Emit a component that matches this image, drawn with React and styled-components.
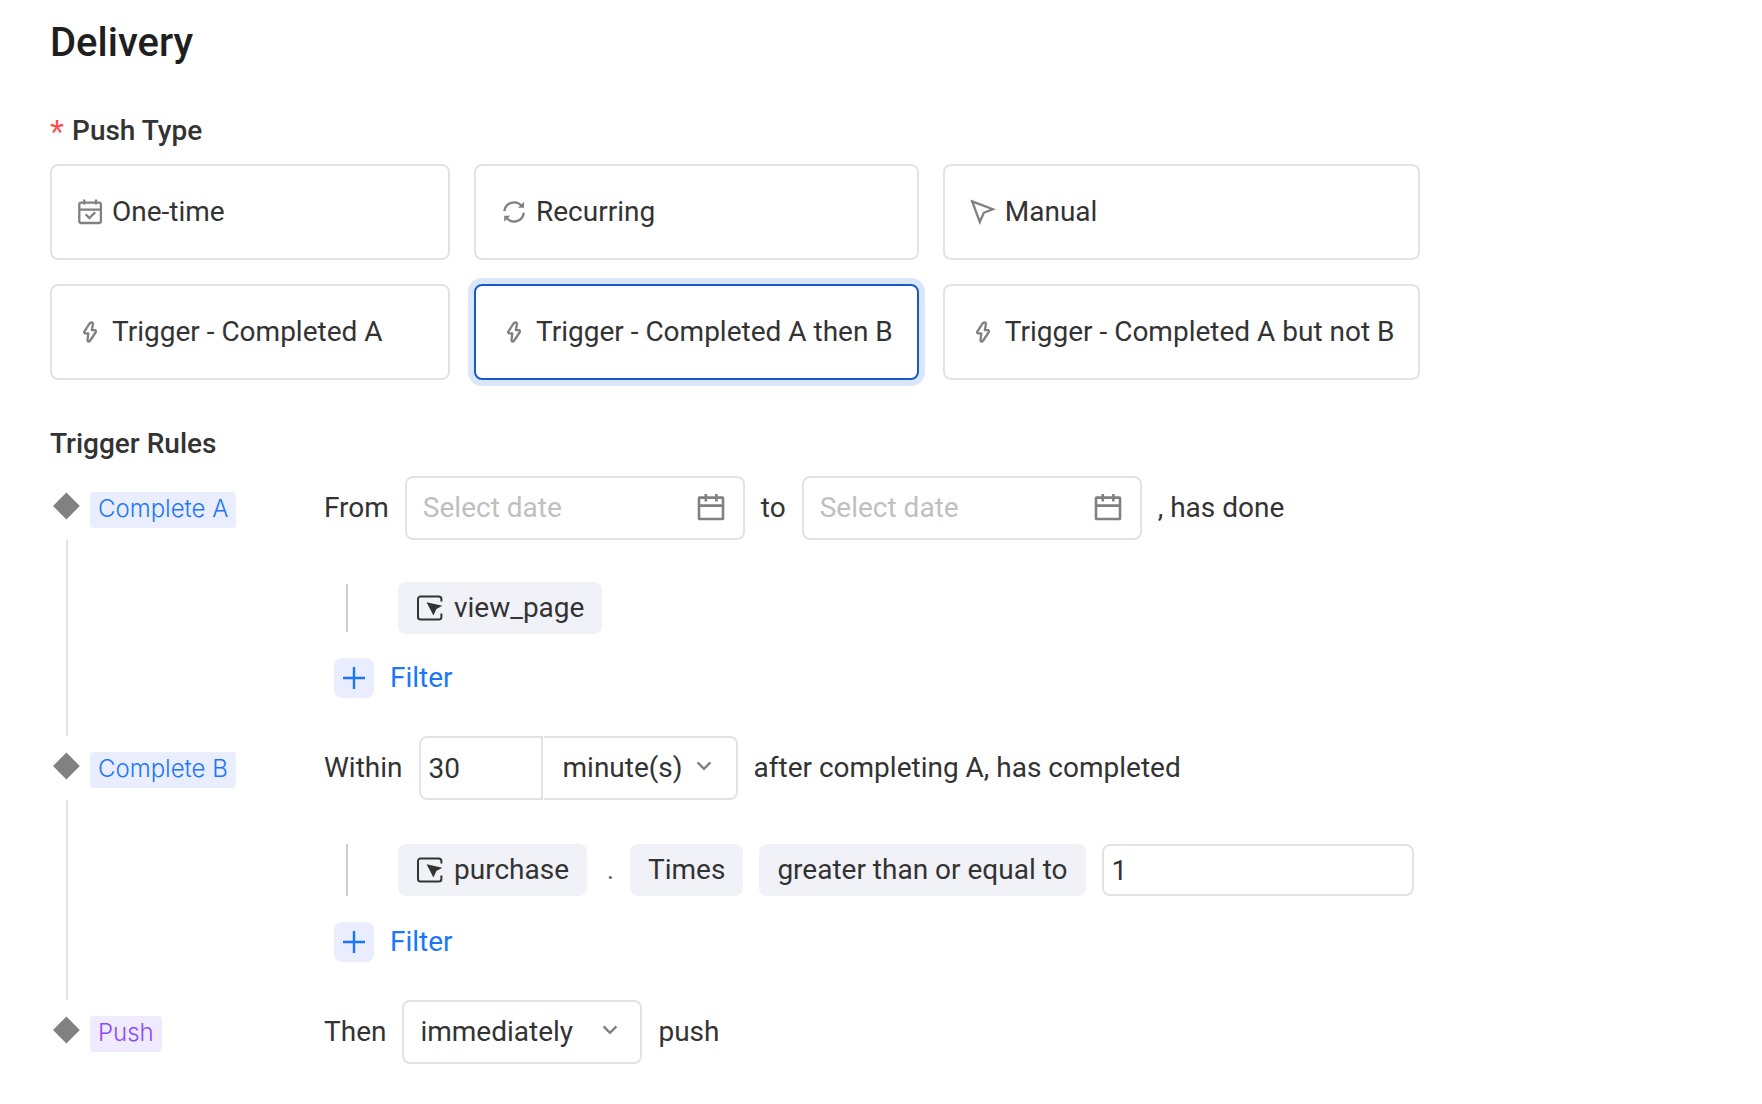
import React, { useState } from 'react'
import styled, { createGlobalStyle } from 'styled-components'

const GlobalStyle = createGlobalStyle`
  * {
    box-sizing: border-box;
  }
  body {
    margin: 0;
    background: #ffffff;
    color: #333333;
    font-family: Roboto, 'Liberation Sans', sans-serif;
    font-size: 28px;
    line-height: 44px;
  }
  input, select, button {
    font: inherit;
    color: inherit;
  }
`

const OnceIcon = () => (
  <Icon viewBox="0 0 28 28">
    <rect x="3.3" y="4.6" width="21.6" height="20.4" rx="2" />
    <path d="M3.3 11.6h21.6M8.3 1.4v5M20 1.4v5M9.6 16.2l3.8 3.8 5.8-5.8" />
  </Icon>
)

const RecurringIcon = () => (
  <Icon viewBox="0 0 28 28">
    <path d="M4.4 13.2A9.7 9.7 0 0 1 21.6 8M23.8 14.6A9.7 9.7 0 0 1 6.4 19.6" />
    <path d="M24 3.8v6h-6zM4.2 23.8v-6h6z" fill="currentColor" stroke="none" />
  </Icon>
)

const ManualIcon = () => (
  <Icon viewBox="0 0 28 28">
    <path d="M3.2 3.4l20.6 7.8-9 3.6-4 9.2z" />
  </Icon>
)

const BoltIcon = () => (
  <Icon viewBox="0 0 28 28">
    <path d="M13.8 5.2L8.3 13.6q-.6 1.4 .8 1.8h3.2l-.8 7.2q.6 2 2.4 .4l5.9-9q.6-1.4-.8-1.8h-3.2l1.2-6.6q-.8-2.2-3.2-.4z" strokeLinejoin="round" />
  </Icon>
)

const CalendarIcon = () => (
  <Icon viewBox="0 0 28 28" $heavy>
    <rect x="2" y="3.6" width="24" height="21.4" rx="0.6" />
    <path d="M2 11.6h24M8.8 0v7.4M19.4 0v7.4" />
  </Icon>
)

const EventIcon = () => (
  <Icon viewBox="0 0 28 28" $dark>
    <path d="M25.4 7.6V5a2.6 2.6 0 0 0-2.6-2.6H4.6A2.6 2.6 0 0 0 2 5v18a2.6 2.6 0 0 0 2.6 2.6h18.2a2.6 2.6 0 0 0 2.6-2.6v-3.6" />
    <path d="M10.6 8.2l15.8 3.6-6 3.2-3 6.4z" fill="currentColor" stroke="none" />
  </Icon>
)

const pushTypes = [
  { id: 'once', label: 'One-time', icon: OnceIcon },
  { id: 'recurring', label: 'Recurring', icon: RecurringIcon },
  { id: 'manual', label: 'Manual', icon: ManualIcon },
  { id: 'a', label: 'Trigger - Completed A', icon: BoltIcon },
  { id: 'a-then-b', label: 'Trigger - Completed A then B', icon: BoltIcon },
  { id: 'a-not-b', label: 'Trigger - Completed A but not B', icon: BoltIcon },
]

const Step = ({ tag, purple, last, children }) => (
  <StepRow>
    <Rail>
      <Marker>
        <Diamond viewBox="0 0 28 28">
          <path d="M13.4 .6L26.8 14 13.4 27.4 0 14z" />
        </Diamond>
      </Marker>
      {!last && <RailLine />}
    </Rail>
    <TagCell>
      <Tag $purple={purple}>{tag}</Tag>
    </TagCell>
    <StepBody $last={last}>{children}</StepBody>
  </StepRow>
)

const DateField = ({ id }) => (
  <DateBox>
    <input id={id} type="text" placeholder="Select date" />
    <CalendarIcon />
  </DateBox>
)

const Dropdown = ({ id, label, options, width, attached }) => (
  <SelectBox $width={width}>
    <Select id={id} aria-label={label} $attached={attached}>
      {options.map(o => <option key={o}>{o}</option>)}
    </Select>
    <Chevron viewBox="0 0 16 16" $attached={attached}>
      <path d="M1.6 4.4L8 10.8l6.4-6.4" />
    </Chevron>
  </SelectBox>
)

const AddFilter = () => (
  <FilterButton type="button">
    <Plus>
      <svg viewBox="0 0 22 22">
        <path d="M11 0v22M0 11h22" />
      </svg>
    </Plus>
    Filter
  </FilterButton>
)

const App = () => {
  const [type, setType] = useState('a-then-b')

  return (
    <Page>
      <GlobalStyle />
      <Title>Delivery</Title>

      <Group>
        <Legend><Star>*</Star>Push Type</Legend>
        <Cards>
          {pushTypes.map(({ id, label, icon: TypeIcon }) => (
            <Card key={id} $active={id === type}>
              <input type="radio" name="push-type" checked={id === type} onChange={() => setType(id)} />
              <TypeIcon />
              {label}
            </Card>
          ))}
        </Cards>
      </Group>

      <Subtitle>Trigger Rules</Subtitle>

      <Step tag="Complete A">
        <Line>
          <label htmlFor="from">From</label>
          <DateField id="from" />
          <label htmlFor="to">to</label>
          <DateField id="to" />
          <span>, has done</span>
        </Line>
        <Events>
          <Bar />
          <Chip type="button"><EventIcon />view_page</Chip>
        </Events>
        <AddFilter />
      </Step>

      <Step tag="Complete B">
        <Line>
          <label htmlFor="window">Within</label>
          <Joined>
            <WindowInput id="window" type="text" defaultValue="30" />
            <Dropdown label="Unit" width={195} attached options={['minute(s)', 'hour(s)', 'day(s)']} />
          </Joined>
          <span>after completing A, has completed</span>
        </Line>
        <Events $tall>
          <Bar />
          <Chip type="button"><EventIcon />purchase</Chip>
          <Dot>.</Dot>
          <Conditions>
            <Chip type="button">Times</Chip>
            <Chip type="button">greater than or equal to</Chip>
            <CountInput type="text" aria-label="Times value" defaultValue="1" />
          </Conditions>
        </Events>
        <AddFilter />
      </Step>

      <Step tag="Push" purple last>
        <Line>
          <label htmlFor="when">Then</label>
          <Dropdown id="when" width={240} options={['immediately', 'after a delay']} />
          <span>push</span>
        </Line>
      </Step>
    </Page>
  )
}

const Page = styled.main`
  padding: 13px 50px 40px;
`

const Title = styled.h1`
  margin: 0 0 36px;
  font-size: 40px;
  font-weight: 500;
  line-height: 60px;
  color: #1f1f1f;
`

const Group = styled.fieldset`
  margin: 0;
  padding: 0;
  border: 0;
`

const Legend = styled.legend`
  display: flex;
  align-items: center;
  gap: 8px;
  height: 44px;
  padding: 0;
  margin-bottom: 11px;
  font-weight: 500;
`

const Star = styled.span`
  padding-top: 6px;
  font-family: 'Liberation Sans', sans-serif;
  font-size: 36px;
  font-weight: 400;
  color: #ff4d4f;
`

const Cards = styled.div`
  display: grid;
  grid-template-columns: minmax(400px, max-content) max-content max-content;
  gap: 24px;
`

const Card = styled.label`
  display: flex;
  align-items: center;
  gap: 8px;
  padding: 24px;
  border: 2px solid ${p => (p.$active ? '#155bc4' : '#e3e3e3')};
  border-radius: 8px;
  box-shadow: ${p => (p.$active ? '0 0 0 6px #d9e7fb' : 'none')};
  white-space: nowrap;
  cursor: pointer;
  input {
    position: absolute;
    opacity: 0;
    pointer-events: none;
  }
`

const Icon = styled.svg`
  flex: none;
  width: 28px;
  height: 28px;
  color: ${p => (p.$dark ? '#333333' : '#808080')};
  fill: none;
  stroke: currentColor;
  stroke-width: ${p => (p.$dark ? 2 : p.$heavy ? 2.6 : 2.3)};
`

const Subtitle = styled.h2`
  margin: 42px 0 10px;
  font-size: 28px;
  font-weight: 500;
  line-height: 44px;
`

const StepRow = styled.section`
  display: flex;
`

const Rail = styled.div`
  display: flex;
  flex-direction: column;
  align-items: center;
  width: 34px;
`

const Marker = styled.div`
  display: flex;
  align-items: center;
  height: 64px;
  padding-bottom: 4px;
`

const Diamond = styled.svg`
  width: 28px;
  height: 28px;
  fill: #808182;
`

const RailLine = styled.div`
  flex: 1;
  width: 2px;
  background: #e3e3e3;
`

const TagCell = styled.div`
  width: 240px;
  padding: 16px 0 0 6px;
`

const Tag = styled.span`
  display: block;
  width: fit-content;
  padding: 0 8px 2px;
  border-radius: 4px;
  background: ${p => (p.$purple ? '#f0eafe' : '#e9edfd')};
  color: ${p => (p.$purple ? '#8b4dfa' : '#1a77fa')};
  font-family: Inter, 'Liberation Sans', sans-serif;
  font-size: 24px;
  font-weight: 300;
  line-height: 34px;
`

const StepBody = styled.div`
  flex: 1;
  padding-bottom: ${p => (p.$last ? 0 : 38)}px;
`

const Line = styled.div`
  display: flex;
  align-items: center;
  gap: 16px;
  white-space: nowrap;
`

const DateBox = styled.div`
  display: flex;
  align-items: center;
  width: 340px;
  height: 64px;
  padding: 0 18px 0 16px;
  border: 2px solid #e3e3e3;
  border-radius: 8px;
  input {
    flex: 1;
    min-width: 0;
    padding: 0;
    border: 0;
    outline: none;
    background: none;
  }
  input::placeholder {
    color: #bfbfbf;
  }
`

const Joined = styled.div`
  display: flex;
`

const TextInput = styled.input`
  padding: 0 8px;
  border: 2px solid #e3e3e3;
  border-radius: 8px;
  outline: none;
  background: none;
`

const WindowInput = styled(TextInput)`
  width: 124px;
  height: 64px;
  border-radius: 8px 0 0 8px;
`

const CountInput = styled(TextInput)`
  width: 312px;
  height: 52px;
`

const SelectBox = styled.div`
  position: relative;
  width: ${p => p.$width}px;
`

const Select = styled.select`
  appearance: none;
  display: block;
  width: 100%;
  height: 64px;
  padding: 0 48px 0 16px;
  border: 2px solid #e3e3e3;
  border-radius: 8px;
  outline: none;
  background: none;
  ${p => p.$attached && `
    padding-left: 18px;
    border-left-color: transparent;
    border-radius: 0 8px 8px 0;
  `}
`

const Chevron = styled.svg`
  position: absolute;
  top: 22px;
  right: ${p => (p.$attached ? 26 : 24)}px;
  width: 16px;
  height: 16px;
  fill: none;
  stroke: #808080;
  stroke-width: 2.4;
  pointer-events: none;
`

const Events = styled.div`
  display: flex;
  align-items: center;
  height: ${p => (p.$tall ? 52 : 48)}px;
  margin: 44px 0 26px 22px;
  white-space: nowrap;
`

const Bar = styled.div`
  align-self: stretch;
  width: 2px;
  margin-right: 50px;
  background: #cccccc;
`

const Chip = styled.button`
  display: flex;
  align-items: center;
  gap: 10px;
  height: 52px;
  padding: 0 18px;
  border: 0;
  border-radius: 8px;
  background: #f1f2f8;
  cursor: pointer;
`

const Dot = styled.span`
  width: 43px;
  padding-left: 4px;
  text-align: center;
  color: #666666;
`

const Conditions = styled.div`
  display: flex;
  gap: 16px;
`

const FilterButton = styled.button`
  display: flex;
  align-items: center;
  gap: 16px;
  height: 40px;
  margin-left: 10px;
  padding: 0;
  border: 0;
  background: none;
  color: #1a77fa;
  cursor: pointer;
`

const Plus = styled.span`
  display: flex;
  align-items: center;
  justify-content: center;
  width: 40px;
  height: 40px;
  border-radius: 8px;
  background: #e9edfd;
  svg {
    width: 22px;
    height: 22px;
    stroke: #1a77fa;
    stroke-width: 2.4;
  }
`

export default App
